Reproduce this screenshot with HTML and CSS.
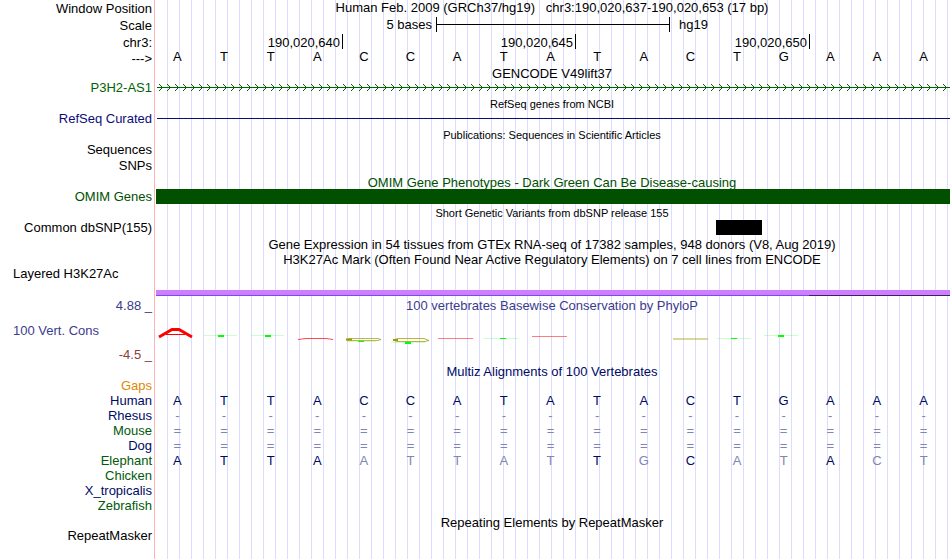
FILE: index.html
```html
<!DOCTYPE html>
<html lang="en">
<head>
  <meta charset="UTF-8" />
  <meta name="viewport" content="width=device-width, initial-scale=1.0"/>
  <title>Human chr3:190,020,637-190,020,653</title>
  <link rel="stylesheet" href="styles.css">
</head>
<body>
<main class="browser">

  <!-- Ruler -->
  <div class="row ruler">
    <div class="label">Window Position</div>
    <div class="data position">Human Feb. 2009 (GRCh37/hg19) &nbsp; chr3:190,020,637-190,020,653 (17 bp)</div>
  </div>
  <div class="row ruler">
    <div class="label">Scale</div>
    <div class="data scale">
      <span class="scale-size">5 bases</span>
      <span class="scale-bar"></span>
      <span class="scale-db">hg19</span>
    </div>
  </div>
  <div class="row coords">
    <div class="label">chr3:</div>
    <div class="data ticks">
      <span class="tick">190,020,640</span>
      <span class="tick">190,020,645</span>
      <span class="tick">190,020,650</span>
    </div>
  </div>
  <div class="row sequence">
    <div class="label">---&gt;</div>
    <div class="data bases">
      <span>A</span><span>T</span><span>T</span><span>A</span><span>C</span><span>C</span><span>A</span><span>T</span><span>A</span><span>T</span><span>A</span><span>C</span><span>T</span><span>G</span><span>A</span><span>A</span><span>A</span>
    </div>
  </div>

  <!-- Genes -->
  <div class="title">GENCODE V49lift37</div>
  <div class="row">
    <div class="label gene">P3H2-AS1</div>
    <div class="data">
      <svg class="intron" width="100%" height="15" shape-rendering="crispEdges">
        <defs>
          <pattern id="arrows" width="8" height="15" patternUnits="userSpaceOnUse">
            <path d="M2 4h1v1h-1zM3 5h1v1h-1zM4 6h1v1h-1zM4 8h1v1h-1zM3 9h1v1h-1zM2 10h1v1h-1z" fill="#006400"/>
            <rect y="7" width="8" height="1" fill="#006400"/>
          </pattern>
        </defs>
        <rect width="100%" height="15" fill="url(#arrows)"/>
      </svg>
    </div>
  </div>
  <div class="title small">RefSeq genes from NCBI</div>
  <div class="row">
    <div class="label refseq">RefSeq Curated</div>
    <div class="data"><div class="refseq-line"></div></div>
  </div>

  <!-- Publications -->
  <div class="title small">Publications: Sequences in Scientific Articles</div>
  <div class="row"><div class="label">Sequences</div></div>
  <div class="row snps"><div class="label">SNPs</div></div>

  <!-- Variants -->
  <div class="title omim">OMIM Gene Phenotypes - Dark Green Can Be Disease-causing</div>
  <div class="row">
    <div class="label omim">OMIM Genes</div>
    <div class="data"><div class="omim-bar"></div></div>
  </div>
  <div class="title small">Short Genetic Variants from dbSNP release 155</div>
  <div class="row">
    <div class="label">Common dbSNP(155)</div>
    <div class="data"><div class="snp"></div></div>
  </div>

  <!-- Expression and regulation -->
  <div class="title tight">Gene Expression in 54 tissues from GTEx RNA-seq of 17382 samples, 948 donors (V8, Aug 2019)</div>
  <div class="title">H3K27Ac Mark (Often Found Near Active Regulatory Elements) on 7 cell lines from ENCODE</div>
  <div class="row h3k27ac">
    <div class="label left">Layered H3K27Ac</div>
    <div class="data">
      <div class="signal"><div class="signal-edge"></div></div>
    </div>
  </div>

  <!-- Conservation -->
  <div class="row conservation">
    <div class="label wiggle">
      <span>4.88 _</span>
      <span class="left">100 Vert. Cons</span>
      <span class="negative">-4.5 _</span>
    </div>
    <div class="data">
      <div class="phylop">100 vertebrates Basewise Conservation by PhyloP</div>
      <svg class="logo" viewBox="0 0 796 50" width="100%" height="50" preserveAspectRatio="none">
        <g fill="none" stroke="#ff0000">
          <path d="M5 25L18 17.5H25L38 25" stroke-width="3"/>
          <path d="M12 22.5H31"/>
          <path d="M144 27.5L152 26.5H172L179 27.5" opacity=".7"/>
          <path d="M284 26.5H319M378 24.5H413" opacity=".5"/>
        </g>
        <g fill="none" stroke="#a09b00">
          <path d="M227 27.5L224 28.5H194L192 27.5L196 26.5H224L227 27.5" opacity=".7"/>
          <path d="M192 27.5H198" stroke-width="2"/>
          <path d="M275 28.5L271 29.5H243L239 28L244 26.5H270L275 28.5" opacity=".75"/>
          <path d="M239 28H244" stroke-width="2"/>
          <path d="M519 27L554 27" stroke-width="2" opacity=".4"/>
        </g>
        <path d="M50 23.5H83M97 23.5H130M193 29.5H222M237 30.5H271M330 26.5H364M563 26.5H597M610 23.5H644" fill="none" stroke="#00ff00" opacity=".2"/>
        <path d="M64 23h6v2h-6zM111 23h6v2h-6zM204 29h6v1h-6zM251 30h6v2h-6zM346 26h6v1h-6zM577 26h6v1h-6zM624 23h6v2h-6z" fill="#00ff00" shape-rendering="crispEdges"/>
      </svg>
    </div>
  </div>

  <!-- Multiple alignment -->
  <div class="title multiz">Multiz Alignments of 100 Vertebrates</div>
  <table class="alignment">
    <tbody>
      <tr class="gaps"><th scope="row">Gaps</th><td colspan="17"></td></tr>
      <tr><th scope="row">Human</th><td>A</td><td>T</td><td>T</td><td>A</td><td>C</td><td>C</td><td>A</td><td>T</td><td>A</td><td>T</td><td>A</td><td>C</td><td>T</td><td>G</td><td>A</td><td>A</td><td>A</td></tr>
      <tr class="unaligned"><th scope="row">Rhesus</th><td>-</td><td>-</td><td>-</td><td>-</td><td>-</td><td>-</td><td>-</td><td>-</td><td>-</td><td>-</td><td>-</td><td>-</td><td>-</td><td>-</td><td>-</td><td>-</td><td>-</td></tr>
      <tr class="alt unaligned"><th scope="row">Mouse</th><td>=</td><td>=</td><td>=</td><td>=</td><td>=</td><td>=</td><td>=</td><td>=</td><td>=</td><td>=</td><td>=</td><td>=</td><td>=</td><td>=</td><td>=</td><td>=</td><td>=</td></tr>
      <tr class="unaligned"><th scope="row">Dog</th><td>=</td><td>=</td><td>=</td><td>=</td><td>=</td><td>=</td><td>=</td><td>=</td><td>=</td><td>=</td><td>=</td><td>=</td><td>=</td><td>=</td><td>=</td><td>=</td><td>=</td></tr>
      <tr class="alt"><th scope="row">Elephant</th><td>A</td><td>T</td><td>T</td><td>A</td><td class="diff">A</td><td class="diff">T</td><td class="diff">T</td><td class="diff">A</td><td class="diff">T</td><td>T</td><td class="diff">G</td><td>C</td><td class="diff">A</td><td class="diff">T</td><td>A</td><td class="diff">C</td><td class="diff">T</td></tr>
      <tr class="alt"><th scope="row">Chicken</th><td colspan="17"></td></tr>
      <tr><th scope="row">X_tropicalis</th><td colspan="17"></td></tr>
      <tr class="alt"><th scope="row">Zebrafish</th><td colspan="17"></td></tr>
    </tbody>
  </table>

  <!-- Repeats -->
  <div class="title tight">Repeating Elements by RepeatMasker</div>
  <div class="row"><div class="label">RepeatMasker</div></div>

</main>
</body>
</html>
```
FILE: styles.css
```css
body {
  margin: 0;
  background-color: #ffffff;
  color: #000000;
  font-family: "Liberation Sans", Arial, sans-serif;
  font-size: 13px;
  line-height: 15px;
}
/* guide lines every 12px, with the red divider after the labels */
.browser {
  min-height: 100vh;
  background-image:
    linear-gradient(#ffb4b4, #ffb4b4),
    linear-gradient(#ffffff, #ffffff),
    repeating-linear-gradient(to right, #dcdcff 0, #dcdcff 1px, transparent 1px, transparent 12px);
  background-size: 1px 100%, 155px 100%, 100% 100%;
  background-position: 154px 0, 0 0, 167px 0;
  background-repeat: no-repeat;
}
.row {
  display: flex;
  height: 15px;
}
.label {
  flex: none;
  box-sizing: border-box;
  width: 154px;
  padding-right: 2px;
  text-align: right;
}
.data {
  flex: 1;
  min-width: 0;
}
.title {
  height: 16px;
  margin-left: 154px;
  line-height: 19px;
  text-align: center;
  white-space: nowrap;
}
.small {
  font-size: 11px;
  line-height: 18px;
}
.tight {
  height: 15px;
}
.left {
  padding-left: 13px;
  text-align: left;
}

/* ruler */
.ruler {
  height: 17px;
  line-height: 17px;
}
.position {
  line-height: 15px;
  text-align: center;
}
.scale {
  display: grid;
  grid-template-columns: 282fr 234fr 280fr;
  line-height: 16px;
}
.scale-size {
  padding-right: 4px;
  text-align: right;
}
.scale-bar {
  height: 15px;
  box-sizing: border-box;
  border-left: 1px solid #000000;
  border-right: 1px solid #000000;
  background: linear-gradient(#000000, #000000) 0 7px / 100% 1px no-repeat;
}
.scale-db {
  padding-left: 9px;
}
.coords {
  height: 16px;
  line-height: 18px;
}
.ticks {
  display: grid;
  grid-template-columns: 189fr 233fr 234fr 140fr;
}
.tick {
  height: 15px;
  padding-right: 2px;
  border-right: 1px solid #000000;
  text-align: right;
}
.sequence {
  height: 14px;
}
.sequence .label {
  line-height: 17px;
}
.bases {
  display: grid;
  grid-template-columns: repeat(17, 1fr);
  padding-right: 3px;
  line-height: 14px;
  text-align: center;
}

/* tracks */
.gene {
  color: #006400;
}
.intron {
  display: block;
  box-sizing: border-box;
  padding-left: 3px;
}
.refseq {
  color: #0c0c78;
}
.refseq-line {
  height: 1px;
  margin: 7px 0 0 3px;
  background-color: #0c0c78;
}
.snps {
  height: 16px;
  line-height: 17px;
}
.omim {
  color: #005000;
}
.omim-bar {
  height: 15px;
  margin-left: 2px;
  background-color: #005000;
}
.snp {
  width: 5.8%;
  height: 15px;
  margin-left: 70.6%;
  background-color: #000000;
}
.h3k27ac {
  height: 30px;
}
.signal {
  display: flex;
  align-items: flex-end;
  justify-content: flex-end;
  height: 5px;
  margin: 24px 0 0 2px;
  border-bottom: 1px solid #6e50ff;
  background-color: #d27dff;
}
.signal-edge {
  width: 17.8%;
  height: 1px;
  margin-bottom: -1px;
  background-color: #32285a;
}
.conservation {
  height: 66px;
}
.wiggle {
  display: flex;
  flex-direction: column;
  justify-content: space-between;
  padding-top: 2px;
  color: #3c3c8c;
}
.negative {
  color: #8c3c3c;
}
.phylop {
  height: 16px;
  line-height: 19px;
  color: #3c3c8c;
  text-align: center;
}
.logo {
  display: block;
}

/* alignment */
.multiz {
  color: #000a64;
}
.alignment {
  width: calc(100% - 3px);
  table-layout: fixed;
  border-collapse: collapse;
  color: #000a64;
}
.alignment th {
  width: 152px;
  padding: 0 2px 0 0;
  font-weight: normal;
  text-align: right;
}
.alignment td {
  height: 15px;
  padding: 0;
  text-align: center;
}
.alignment .alt th {
  color: #005a0a;
}
.alignment .gaps th {
  color: #e18700;
}
.alignment .diff,
.unaligned td {
  color: #8085b2;
}
```
